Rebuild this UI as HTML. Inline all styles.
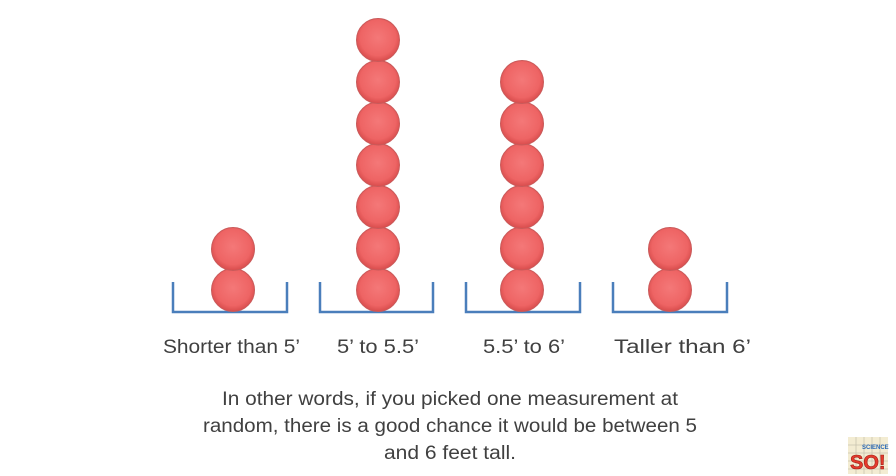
<!DOCTYPE html>
<html><head><meta charset="utf-8"><style>
html,body{margin:0;padding:0;background:#fff;width:896px;height:476px;overflow:hidden}
</style></head><body>
<svg width="896" height="476" xmlns="http://www.w3.org/2000/svg">
<defs>
<radialGradient id="b" cx="50%" cy="45%" r="55%">
<stop offset="0" stop-color="#f47878"/>
<stop offset="0.75" stop-color="#ee6464"/>
<stop offset="1" stop-color="#d84c4c"/>
</radialGradient>
<g id="ball"><circle r="21.5" fill="url(#b)" stroke="#c95a5a" stroke-width="1"/></g>
</defs>
<rect width="896" height="476" fill="#fff"/>
<g fill="none" stroke="#4a7ebb" stroke-width="2.5">
<path d="M173 282V312H287V282"/>
<path d="M320 282V312H433V282"/>
<path d="M466 282V312H580V282"/>
<path d="M613 282V312H727V282"/>
</g>
<g>
<use href="#ball" x="233" y="290"/><use href="#ball" x="233" y="249"/>
<use href="#ball" x="378" y="290"/><use href="#ball" x="378" y="248.5"/><use href="#ball" x="378" y="207"/><use href="#ball" x="378" y="165"/><use href="#ball" x="378" y="123.5"/><use href="#ball" x="378" y="82"/><use href="#ball" x="378" y="40"/>
<use href="#ball" x="522" y="290"/><use href="#ball" x="522" y="248.5"/><use href="#ball" x="522" y="207"/><use href="#ball" x="522" y="165"/><use href="#ball" x="522" y="123.5"/><use href="#ball" x="522" y="82"/>
<use href="#ball" x="670" y="290"/><use href="#ball" x="670" y="249"/>
</g>
<g font-family="Liberation Sans, sans-serif" fill="#404040" font-size="19">
<text x="163" y="353" textLength="137" lengthAdjust="spacingAndGlyphs">Shorter than 5’</text>
<text x="337" y="353" textLength="82" lengthAdjust="spacingAndGlyphs">5’ to 5.5’</text>
<text x="483" y="353" textLength="82" lengthAdjust="spacingAndGlyphs">5.5’ to 6’</text>
<text x="614" y="353" textLength="137" lengthAdjust="spacingAndGlyphs">Taller than 6’</text>
<text x="222" y="405" textLength="456" lengthAdjust="spacingAndGlyphs">In other words, if you picked one measurement at</text>
<text x="203" y="432" textLength="494" lengthAdjust="spacingAndGlyphs">random, there is a good chance it would be between 5</text>
<text x="384" y="459" textLength="132" lengthAdjust="spacingAndGlyphs">and 6 feet tall.</text>
</g>
<g>
<rect x="848" y="437" width="40" height="37" fill="#f3ecd2"/>
<path d="M848 445H888M848 453H888M848 461H888M848 469H888M856 437V474M864 437V474M872 437V474M880 437V474" stroke="#c9c3b0" stroke-width="0.8"/>
<text x="850" y="469" font-family="Liberation Sans, sans-serif" font-weight="bold" font-size="20" fill="#e53b2c" stroke="#a01e16" stroke-width="0.6">SO!</text>
<text x="862" y="449" font-family="Liberation Sans, sans-serif" font-weight="bold" font-size="6" fill="#2a6ab8">SCIENCE</text>
</g>
</svg>
</body></html>
